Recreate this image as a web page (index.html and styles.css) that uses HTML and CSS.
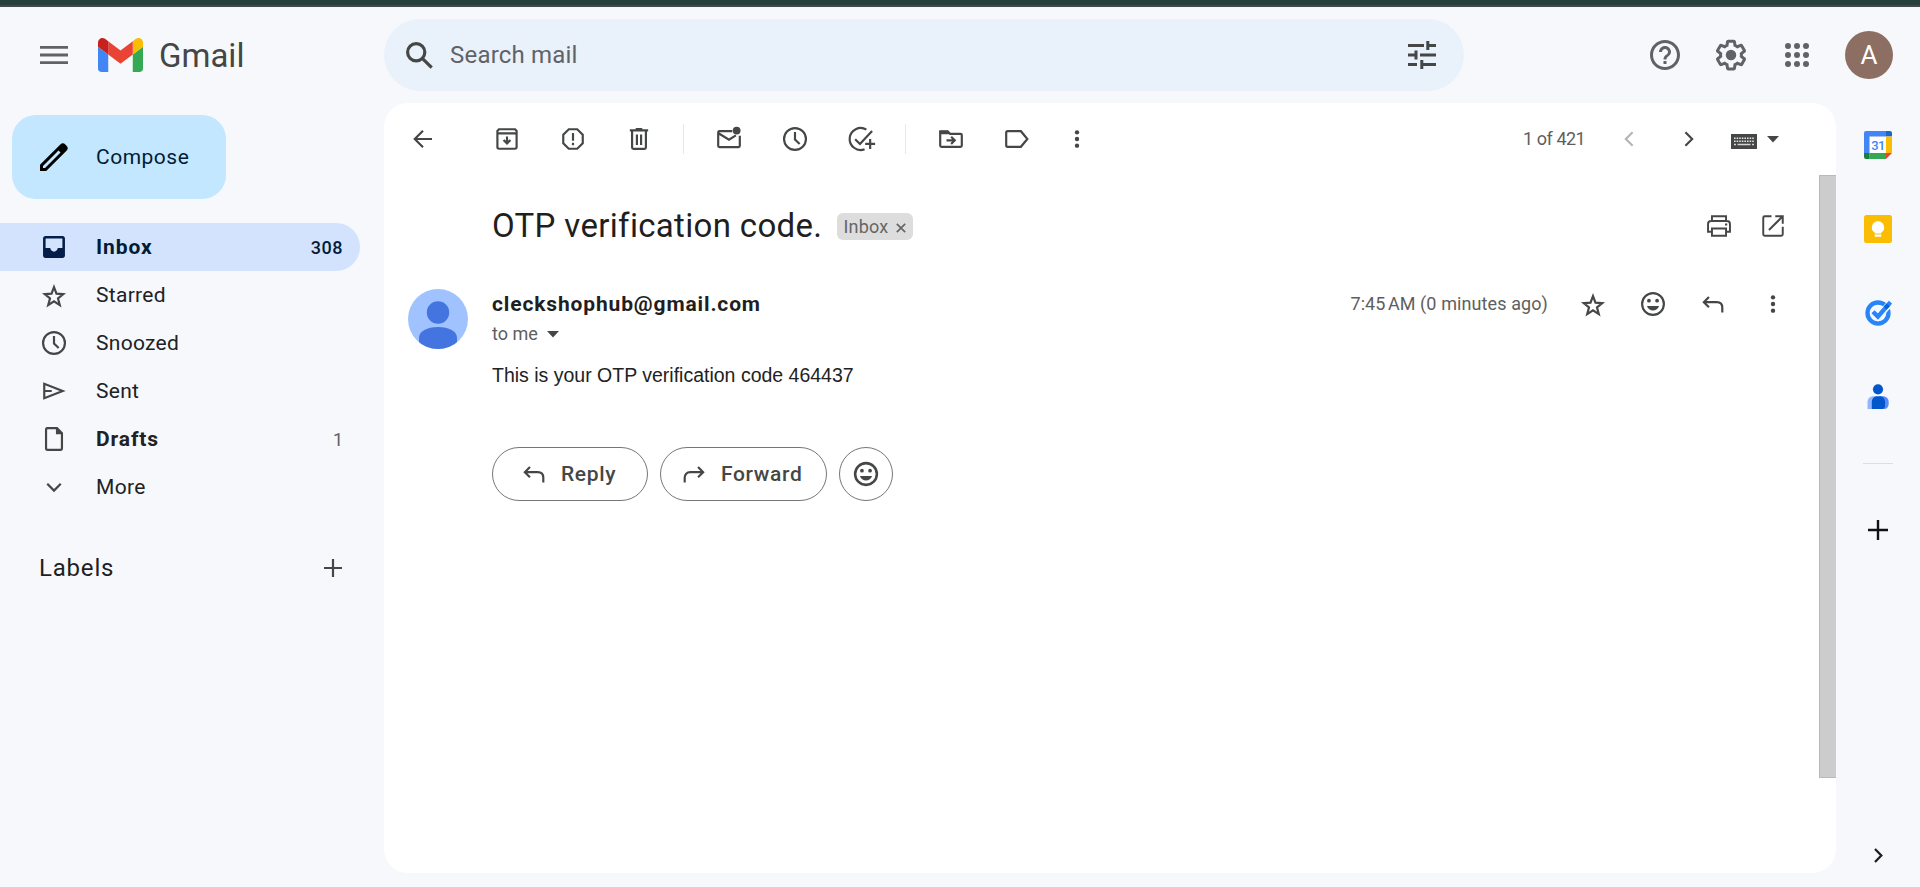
FILE: index.html
```html
<!DOCTYPE html>
<html lang="en">
<head>
<meta charset="utf-8">
<title>Gmail</title>
<link rel="stylesheet" href="styles.css">
</head>
<body>
<svg class="sprite" aria-hidden="true">
  <symbol id="clock" viewBox="0 0 20 20"><circle cx="10" cy="10" r="7.3"/><path d="M10 5.3v5l3.1 3.1"/></symbol>
  <symbol id="star" viewBox="0 0 20 20"><path d="M10 4.1l1.65 4.3 4.5.3-3.5 2.85 1.2 4.5L10 13.6l-3.85 2.45 1.2-4.5-3.5-2.85 4.5-.3z"/></symbol>
  <symbol id="reply" viewBox="0 0 20 20"><path d="M7.3 5.4L3.9 8.8l3.4 3.4M4.2 8.8h8.3c2.3 0 3.7 1.5 3.7 3.7v3.1"/></symbol>
  <symbol id="forward" viewBox="0 0 20 20"><path d="M12.7 5.4l3.4 3.4-3.4 3.4M15.8 8.8H7.5c-2.3 0-3.7 1.5-3.7 3.7v3.1"/></symbol>
  <symbol id="emoji" viewBox="0 0 20 20"><circle cx="10" cy="10" r="7.25"/><g class="solid"><circle cx="7.3" cy="7.8" r="1.25"/><circle cx="12.7" cy="7.8" r="1.25"/><path d="M6 11.4h8c-.6 1.9-2.1 3-4 3s-3.4-1.1-4-3z"/></g></symbol>
  <symbol id="more" viewBox="0 0 20 20"><g class="solid"><circle cx="10" cy="5.55" r="1.45"/><circle cx="10" cy="10" r="1.45"/><circle cx="10" cy="14.45" r="1.45"/></g></symbol>
  <symbol id="caret" viewBox="0 0 12 7"><path class="solid" d="M0 0h12L6 6.6z"/></symbol>
</svg>

<div class="window-edge"></div>

<header class="header">
  <div class="brand">
    <svg class="menu-icon" viewBox="0 0 28 18"><path d="M0 1.4h28M0 9h28M0 16.6h28"/></svg>
    <svg class="logo" viewBox="52 42 88 66">
      <path fill="#4285f4" d="M58 108h14V74L52 59v43c0 3.32 2.69 6 6 6"/>
      <path fill="#34a853" d="M120 108h14c3.32 0 6-2.69 6-6V59l-20 15"/>
      <path fill="#fbbc04" d="M120 48v26l20-15v-8c0-7.42-8.47-11.65-14.4-7.2"/>
      <path fill="#ea4335" d="M72 74V48l24 18 24-18v26L96 92"/>
      <path fill="#c5221f" d="M52 51v8l20 15V48l-5.6-4.2c-5.94-4.45-14.4-.22-14.4 7.2"/>
    </svg>
    <span class="brand-name">Gmail</span>
  </div>
  <div class="search">
    <svg class="search-icon" viewBox="0 0 27 27"><circle cx="10.2" cy="10.2" r="8.6"/><path d="M16.3 16.3l9.4 9.4"/></svg>
    <span class="search-text">Search mail</span>
    <svg class="tune" viewBox="0 0 28 28"><path d="M0 4.5h16M19.8 4.5H28M19.8 0v9M0 14h8.5M8 9.5v9M12 14h16M0 23.5h9M13.8 19v9M13.8 23.5H28"/></svg>
  </div>
  <div class="account">
    <svg class="big-icon" viewBox="0 0 24 24"><path d="M11 18h2v-2h-2v2zm1-16C6.48 2 2 6.48 2 12s4.48 10 10 10 10-4.48 10-10S17.520 2 12 2zm0 18c-4.410 0-8-3.590-8-8s3.590-8 8-8 8 3.590 8 8-3.590 8-8 8zm0-14c-2.210 0-4 1.790-4 4h2c0-1.100.9-2 2-2s2 .9 2 2c0 2-3 1.750-3 5h2c0-2.250 3-2.500 3-5 0-2.210-1.790-4-4-4z"/></svg>
    <svg class="big-icon" viewBox="0 0 24 24"><path d="M13.850 22.250h-3.700c-.74 0-1.360-.54-1.450-1.270l-.27-1.890c-.27-.14-.53-.29-.79-.46l-1.800.72c-.7.260-1.470-.03-1.810-.65L2.200 15.530c-.35-.66-.2-1.440.36-1.880l1.530-1.190c-.01-.15-.02-.3-.02-.46 0-.15.010-.31.020-.46l-1.520-1.190c-.59-.45-.74-1.260-.37-1.880l1.850-3.190c.34-.62 1.110-.9 1.790-.63l1.810.73c.26-.17.520-.32.780-.46l.27-1.910c.09-.7.710-1.250 1.440-1.250h3.700c.74 0 1.360.54 1.450 1.270l.27 1.890c.27.140.53.290.79.460l1.800-.72c.71-.26 1.480.03 1.820.65l1.840 3.180c.36.660.2 1.440-.36 1.880l-1.520 1.190c.01.150.02.300.02.460s-.01.310-.02.460l1.520 1.190c.56.450.72 1.230.37 1.860l-1.860 3.220c-.34.62-1.110.9-1.800.63l-1.800-.72c-.26.170-.52.320-.78.460l-.27 1.910c-.1.680-.72 1.220-1.460 1.220zm-3.230-2h2.760l.37-2.550.53-.22c.44-.18.880-.44 1.340-.78l.45-.34 2.380.96 1.380-2.400-2.030-1.580.07-.56c.03-.26.060-.51.060-.78s-.03-.53-.06-.78l-.07-.56 2.030-1.580-1.390-2.400-2.390.96-.45-.35c-.42-.32-.87-.58-1.330-.77l-.52-.22-.37-2.550h-2.760l-.37 2.550-.53.210c-.44.190-.88.440-1.340.79l-.45.330-2.380-.95-1.390 2.390 2.030 1.580-.07.560a7 7 0 0 0-.06.790c0 .260.02.530.06.780l.07.560-2.030 1.580 1.380 2.400 2.390-.96.450.35c.43.330.86.580 1.330.77l.53.220z"/><circle cx="12" cy="12" r="3.500"/></svg>
    <svg class="big-icon" viewBox="0 0 24 24"><g><circle cx="6" cy="6" r="2"/><circle cx="12" cy="6" r="2"/><circle cx="18" cy="6" r="2"/><circle cx="6" cy="12" r="2"/><circle cx="12" cy="12" r="2"/><circle cx="18" cy="12" r="2"/><circle cx="6" cy="18" r="2"/><circle cx="12" cy="18" r="2"/><circle cx="18" cy="18" r="2"/></g></svg>
    <span class="avatar">A</span>
  </div>
</header>

<div class="body">
  <nav class="sidebar">
    <div class="compose">
      <svg class="pencil" viewBox="0 0 28 28"><path d="M0 28v-6.200L20.300 1.500c1.700-1.700 3.500-1.700 5 0l1.200 1.200c1.700 1.600 1.700 3.400 0 5.100L6.200 28zM3 25h2L20.500 9.500l-2-2L3 23z" fill-rule="evenodd"/></svg>
      <span class="compose-text">Compose</span>
    </div>
    <ul class="folders">
      <li class="folder active">
        <svg class="icon" viewBox="0 0 20 20"><path class="solid" fill-rule="evenodd" d="M4.300 2.700h11.400c.9 0 1.600.7 1.600 1.600v11.400c0 .9-.7 1.600-1.600 1.600H4.300c-.9 0-1.600-.7-1.600-1.600V4.300c0-.9.7-1.600 1.600-1.600zM4.400 4.300v6.400h3.100c.2 1.400 1.200 2.400 2.500 2.400s2.300-1 2.500-2.400h3.100V4.300z"/></svg>
        <span class="name">Inbox</span><span class="count">308</span>
      </li>
      <li class="folder"><svg class="icon low"><use href="#star"/></svg><span class="name">Starred</span></li>
      <li class="folder"><svg class="icon"><use href="#clock"/></svg><span class="name">Snoozed</span></li>
      <li class="folder"><svg class="icon" viewBox="0 0 20 20"><path d="M3.500 5.200v9.600L15.800 10zM3.500 10h5"/></svg><span class="name">Sent</span></li>
      <li class="folder unread"><svg class="icon" viewBox="0 0 20 20"><path d="M5 2.800h7l3.300 3.400v10c0 .6-.4 1-1 1H5.700c-.6 0-1-.4-1-1V3.800c0-.6.4-1 1-1z"/><path class="solid" d="M11.300 2.500v4.400h4.300z"/></svg><span class="name">Drafts</span><span class="count">1</span></li>
      <li class="folder"><svg class="icon" viewBox="0 0 20 20"><path d="M5.500 7.900L10 12.400l4.500-4.500"/></svg><span class="name">More</span></li>
    </ul>
    <div class="labels">
      <h2 class="labels-title">Labels</h2>
      <svg class="plus" viewBox="0 0 18 18"><path d="M9 0v18M0 9h18"/></svg>
    </div>
  </nav>

  <main class="panel">
    <div class="toolbar">
      <span class="tool back"><svg class="icon" viewBox="0 0 20 20"><path d="M16 10H4.800M10 4.500L4.500 10l5.500 5.500"/></svg></span>
      <span class="tool"><svg class="icon" viewBox="0 0 20 20"><path d="M3.600 6.200V4.600l1-1.100h10.800l1 1.100v10.800c0 .6-.5 1.100-1.100 1.100H4.700c-.6 0-1.100-.5-1.100-1.100zM3.600 6.200h12.800M10 8.300v4M7.700 10.600l2.300 2.300 2.300-2.300"/></svg></span>
      <span class="tool"><svg class="icon" viewBox="0 0 20 20"><path d="M7.200 3.500h5.600l3.700 3.700v5.600l-3.700 3.700H7.200l-3.700-3.700V7.200zM10 6v5.200M10 12.500v1.600"/></svg></span>
      <span class="tool"><svg class="icon" viewBox="0 0 20 20"><path d="M3.900 4.200h12.200M7.800 3.400h4.400M5.400 4.500v11.200c0 .5.400.9.900.9h7.400c.5 0 .9-.4.900-.9V4.500M8.600 7v7M11.400 7v7"/></svg></span>
      <span class="divider"></span>
      <span class="tool"><svg class="icon" viewBox="0 0 20 20"><path d="M12.200 4.800H3.700c-.5 0-.9.400-.9.900v8.800c0 .5.400.9.900.9h12.600c.5 0 .9-.4.900-.9V7.800M3 6.200l7 4.300 4.600-2.900"/><circle class="solid" cx="15.100" cy="4.400" r="2.600"/></svg></span>
      <span class="tool"><svg class="icon"><use href="#clock"/></svg></span>
      <span class="tool"><svg class="icon" viewBox="0 0 20 20"><path d="M13.600 3.800A7.300 7.300 0 1 0 12.400 16.800M6.100 10.100l3.200 3.200 8.100-8.700M16.100 10v6.600M12.800 13.300h6.600"/></svg></span>
      <span class="divider"></span>
      <span class="tool"><svg class="icon" viewBox="0 0 20 20"><path d="M2.800 5v9.300c0 .5.400.9.900.9h12.600c.5 0 .9-.4.900-.9V7.500c0-.5-.4-.9-.9-.9H9.500L7.800 4.900H3.300zM7 10.900h5.400M10.100 8.500l2.400 2.400-2.400 2.400"/><path class="solid" d="M2.500 4.500h5.400l2 2.400H2.500z"/></svg></span>
      <span class="tool"><svg class="icon" viewBox="0 0 20 20"><path d="M3.800 4.800h8.800L16.900 10l-4.300 5.200H3.800c-.6 0-1-.4-1-1V5.800c0-.6.4-1 1-1z"/></svg></span>
      <span class="tool narrow"><svg class="icon"><use href="#more"/></svg></span>
      <span class="position">1 of 421</span>
      <span class="tool page faded"><svg class="icon" viewBox="0 0 20 20"><path d="M12.400 5.500L7.900 10l4.500 4.500"/></svg></span>
      <span class="tool page"><svg class="icon" viewBox="0 0 20 20"><path d="M7.600 5.500l4.500 4.500-4.500 4.500"/></svg></span>
      <svg class="keyboard" viewBox="0 0 26 15"><path fill="#444746" d="M0 0h26v15H0z"/><path class="keys" d="M3 4.200h20M3 7.200h20"/><path class="space" d="M3 10.500h2M6.500 10.500h13M21 10.500h2"/></svg>
      <svg class="caret"><use href="#caret"/></svg>
    </div>

    <div class="view">
      <article class="mail">
        <div class="subject-row">
          <h1 class="subject">OTP verification code.</h1>
          <span class="chip"><span>Inbox</span><svg class="chip-x" viewBox="0 0 10 10"><path d="M.8.800l8.400 8.400M9.200.800L.8 9.200"/></svg></span>
          <div class="subject-tools">
            <svg class="icon thin" viewBox="0 0 20 20"><path d="M5.300 6.500V3.500h9.400v3M5.300 13.800H2.700V8.600c0-1.200.8-2 2-2h10.600c1.200 0 2 .8 2 2v5.200h-2.600M5.300 11.600h9.400v4.900H5.300zM14 9h1.500"/></svg>
            <svg class="icon thin" viewBox="0 0 20 20"><path d="M9 3.500H4.500c-.6 0-1 .4-1 1v11c0 .6.400 1 1 1h11c.6 0 1-.4 1-1V10.500M11.500 3.500h5v5M16.300 3.700L7.300 12.700"/></svg>
          </div>
        </div>
        <div class="sender-row">
          <svg class="person" viewBox="0 0 60 60"><defs><clipPath id="disc"><circle cx="30" cy="30" r="30"/></clipPath></defs><g clip-path="url(#disc)"><path fill="#a0c3ff" d="M0 0h60v60H0z"/><g fill="#4374e0"><circle cx="30" cy="23.500" r="11.200"/><path d="M11 49c0-7 8-11 19-11s19 4 19 11v12H11z"/></g></g></svg>
          <div class="sender">
            <div class="address">cleckshophub@gmail.com</div>
            <div class="recipient"><span>to me</span><svg class="caret"><use href="#caret"/></svg></div>
          </div>
          <div class="meta">
            <span class="time">7:45&#8239;AM (0 minutes ago)</span>
            <svg class="icon low"><use href="#star"/></svg>
            <svg class="icon"><use href="#emoji"/></svg>
            <svg class="icon"><use href="#reply"/></svg>
            <svg class="icon"><use href="#more"/></svg>
          </div>
        </div>
        <p class="message">This is your OTP verification code 464437</p>
        <div class="actions">
          <span class="action reply"><svg class="icon"><use href="#reply"/></svg><span>Reply</span></span>
          <span class="action forward"><svg class="icon"><use href="#forward"/></svg><span>Forward</span></span>
          <span class="action react"><svg class="icon"><use href="#emoji"/></svg></span>
        </div>
      </article>
      <div class="scrollbar"></div>
    </div>
  </main>

  <aside class="rail">
    <svg class="app" viewBox="0 0 28 28"><path fill="#fff" d="M5 5h17v17H5z"/><path fill="#4285f4" d="M0 2a2 2 0 0 1 2-2h20v5.500H5.500V22H0z"/><path fill="#1967d2" d="M22 0h4a2 2 0 0 1 2 2v3.500h-6z"/><path fill="#fbbc04" d="M22 5.500h6V22h-6z"/><path fill="#34a853" d="M5.500 22H22v6H5.500z"/><path fill="#188038" d="M0 22h5.500v6H2a2 2 0 0 1-2-2z"/><path fill="#ea4335" d="M22 22h6l-6 6z"/><text x="14" y="18.700" class="day">31</text></svg>
    <svg class="app" viewBox="0 0 28 28"><rect width="28" height="28" rx="2.500" fill="#fbbc04"/><path fill="#fff" d="M14 6.200a6.200 6.200 0 0 0-3.300 11.400V18.500h6.600v-.9A6.200 6.200 0 0 0 14 6.200zM10.700 19.600h6.600v2.200h-6.600z"/></svg>
    <svg class="app" viewBox="0 0 28 28"><circle cx="14" cy="14" r="10.500" fill="none" stroke="#2684fc" stroke-width="4.300"/><path d="M9 13l4.900 4.800L24.500 6.200" fill="none" stroke="#f6f8fc" stroke-width="6.800"/><path d="M9 12.800l4.900 4.800L26.500 3.200" fill="none" stroke="#2684fc" stroke-width="4.400"/><path fill="#0066da" d="M19.600 7.400l3.200-3 3 3-3.300 3.200z"/></svg>
    <svg class="app" viewBox="0 0 28 28"><path fill="#91b5ff" d="M3.500 26V19.500c0-4 2.500-6.200 6-6.200h3V26z"/><path fill="#578cff" d="M15 13.300h3.500c3.800 0 6.200 2.300 6.200 5.700v1.500c0 3.500-1.700 5.500-4.700 5.500h-5z"/><path fill="#0057cc" d="M7.800 26v-6.700c0-3.600 2-6 5.500-6h2c3.700 0 5.700 2.400 5.700 6V23c0 2-1 3-3 3z"/><circle cx="14" cy="6.300" r="5.100" fill="#0057cc"/></svg>
    <div class="rail-line"></div>
    <svg class="rail-plus" viewBox="0 0 20 20"><path d="M10 0v20M0 10h20"/></svg>
    <svg class="rail-chevron" viewBox="0 0 9 15"><path d="M1 1l6.300 6.500L1 14"/></svg>
  </aside>
</div>
</body>
</html>
```
FILE: styles.css
```css
* { box-sizing: border-box; }

body {
  margin: 0;
  height: 887px;
  display: flex;
  flex-direction: column;
  overflow: hidden;
  background: #f6f8fc;
  color: #1f1f1f;
  font-family: Roboto, "Open Sans", "Liberation Sans", sans-serif;
  font-size: 21px;
}

ul, h1, h2, p { margin: 0; padding: 0; font-weight: 400; }
svg { display: block; flex: none; }
span, div, h1, h2 { white-space: nowrap; }
.sprite { display: none; }
.solid { fill: currentColor; stroke: none; }

.icon {
  width: 30px;
  height: 30px;
  fill: none;
  stroke: currentColor;
  stroke-width: 1.45;
  color: #444746;
}
.icon.thin { stroke-width: 1.3; }
.caret { width: 12px; height: 7px; color: #444746; }

.window-edge { height: 7px; background: #28403c; border-bottom: 2px solid #474747; }

/* Header */
.header { display: flex; align-items: center; height: 96px; }
.brand { display: flex; align-items: center; width: 384px; padding-left: 40px; }
.menu-icon { width: 28px; height: 18px; stroke: #5f6368; stroke-width: 2.8; }
.logo { width: 45px; height: 34px; margin-left: 30px; }
.brand-name { margin-left: 16px; font-size: 33px; color: #444746; }

.search {
  display: flex;
  align-items: center;
  width: 1080px;
  height: 72px;
  padding: 0 28px 0 22px;
  border-radius: 36px;
  background: #e9f1fb;
}
.search-icon { width: 27px; height: 27px; fill: none; stroke: #444746; stroke-width: 3.2; }
.search-text { flex: 1; margin-left: 17px; font-size: 24px; letter-spacing: .2px; color: #5f6368; }
.tune { width: 28px; height: 28px; stroke: #444746; stroke-width: 3; }

.account { display: flex; align-items: center; gap: 30px; margin-left: auto; padding-right: 27px; }
.big-icon { width: 36px; height: 36px; fill: #5f6368; }
.avatar {
  width: 48px;
  height: 48px;
  border-radius: 50%;
  background: #8d6e63;
  color: #fff;
  font-size: 26px;
  line-height: 49px;
  text-align: center;
}

.body { display: flex; height: 770px; }

/* Sidebar */
.sidebar { width: 384px; padding-top: 12px; }
.compose {
  display: flex;
  align-items: center;
  gap: 28px;
  width: 214px;
  height: 84px;
  margin-left: 12px;
  padding-left: 28px;
  border-radius: 24px;
  background: #c2e7ff;
  color: #001d35;
}
.compose-text { letter-spacing: .5px; }
.pencil { width: 28px; height: 28px; fill: #000; }
.folders { margin-top: 24px; list-style: none; }
.folder {
  display: flex;
  align-items: center;
  width: 360px;
  height: 48px;
  padding: 0 17px 0 39px;
  color: #202124;
}
.icon.low { position: relative; top: 1px; }
.name { flex: 1; margin-left: 27px; letter-spacing: .3px; }
.count { font-size: 18px; color: #5e5e5e; }
.active { border-radius: 0 24px 24px 0; background: #d3e3fd; color: #001d35; font-weight: 700; }
.active .name { letter-spacing: .9px; }
.active .icon { color: #041e49; }
.active .count { color: #001d35; font-weight: 500; letter-spacing: .5px; }
.unread .name { font-weight: 700; letter-spacing: .9px; }
.labels { display: flex; align-items: center; justify-content: space-between; width: 360px; height: 48px; margin-top: 33px; padding: 0 18px 0 39px; }
.labels-title { font-size: 24px; letter-spacing: .8px; }
.plus { width: 18px; height: 18px; stroke: #444746; stroke-width: 2.2; }

/* Mail panel */
.panel { display: flex; flex-direction: column; width: 1452px; border-radius: 24px; background: #fff; overflow: hidden; }
.toolbar { display: flex; align-items: center; height: 72px; padding-left: 15px; }
.tool { display: flex; justify-content: center; width: 66px; }
.tool.back { width: 48px; margin-right: 27px; }
.tool.narrow { width: 54px; }
.tool.page { width: 60px; }
.faded .icon { color: #b4b5b5; }
.divider { width: 1px; height: 30px; margin: 0 12px 0 11px; background: #e6e8eb; }
.position { margin: -1px 14px 0 auto; font-size: 18px; letter-spacing: -.6px; word-spacing: .5px; color: #5e5e5e; }
.keyboard { width: 26px; height: 15px; margin: 4px 10px 0 12px; }
.keys { stroke: #e4e4e4; stroke-width: 1.6; stroke-dasharray: 1.6 1; }
.space { stroke: #d4d4d4; stroke-width: 1.4; }
.toolbar .caret { margin-right: 57px; }

.view { display: flex; height: 698px; }
.mail { flex: 1; padding: 24px 31px 0 24px; }
.scrollbar { width: 17px; height: 603px; background: #ccc; border: solid #b9b9b9; border-width: 1px 0 1px 1px; }

.subject-row { display: flex; align-items: center; height: 54px; padding-left: 84px; }
.subject { margin-top: -2px; font-size: 33px; letter-spacing: .33px; }
.chip {
  display: flex;
  align-items: center;
  gap: 8px;
  height: 27px;
  width: 76px;
  margin-left: 15px;
  padding: 0 6px;
  border-radius: 6px;
  background: #ddd;
  color: #666;
  font-size: 18px;
  letter-spacing: .2px;
}
.chip-x { width: 10px; height: 10px; margin-top: 3px; stroke: #666; stroke-width: 1.7; }
.subject-tools { display: flex; gap: 24px; margin-left: auto; }

.sender-row { display: flex; margin-top: 36px; height: 60px; }
.person { width: 60px; height: 60px; }
.sender { margin-left: 24px; }
.address { line-height: 30px; font-weight: 700; letter-spacing: .86px; }
.recipient { display: flex; align-items: center; gap: 9px; line-height: 30px; font-size: 18px; color: #5e5e5e; }
.meta { display: flex; align-items: center; gap: 30px; height: 30px; margin-left: auto; }
.time { margin-top: -1px; font-size: 18px; letter-spacing: .1px; color: #5e5e5e; }
.message { margin: 11px 0 0 84px; font: 19.5px/30px "Liberation Sans", Arial, sans-serif; color: #222; }

.actions { display: flex; gap: 12px; margin: 57px 0 0 84px; }
.action {
  display: flex;
  align-items: center;
  height: 54px;
  border: 1px solid #747775;
  border-radius: 27px;
  color: #444746;
  font-weight: 500;
  letter-spacing: .65px;
}
.action .icon { margin-right: 12px; }
.reply { width: 156px; padding-left: 26px; }
.forward { width: 167px; padding-left: 18px; }
.react { width: 54px; justify-content: center; }
.action.react .icon { margin: 0; stroke-width: 1.7; }

/* App rail */
.rail { display: flex; flex-direction: column; align-items: center; width: 84px; padding-top: 28px; }
.app { width: 28px; height: 28px; margin-bottom: 56px; }
.day { fill: #4285f4; font-size: 13px; font-weight: 500; letter-spacing: -.6px; text-anchor: middle; }
.rail-line { width: 30px; height: 1px; margin-top: -4px; background: #dcdee1; }
.rail-plus { width: 20px; height: 20px; margin-top: 56px; stroke: #111; stroke-width: 2.4; }
.rail-chevron { width: 9px; height: 15px; margin-top: 308px; fill: none; stroke: #1f1f1f; stroke-width: 2.3; }
```
